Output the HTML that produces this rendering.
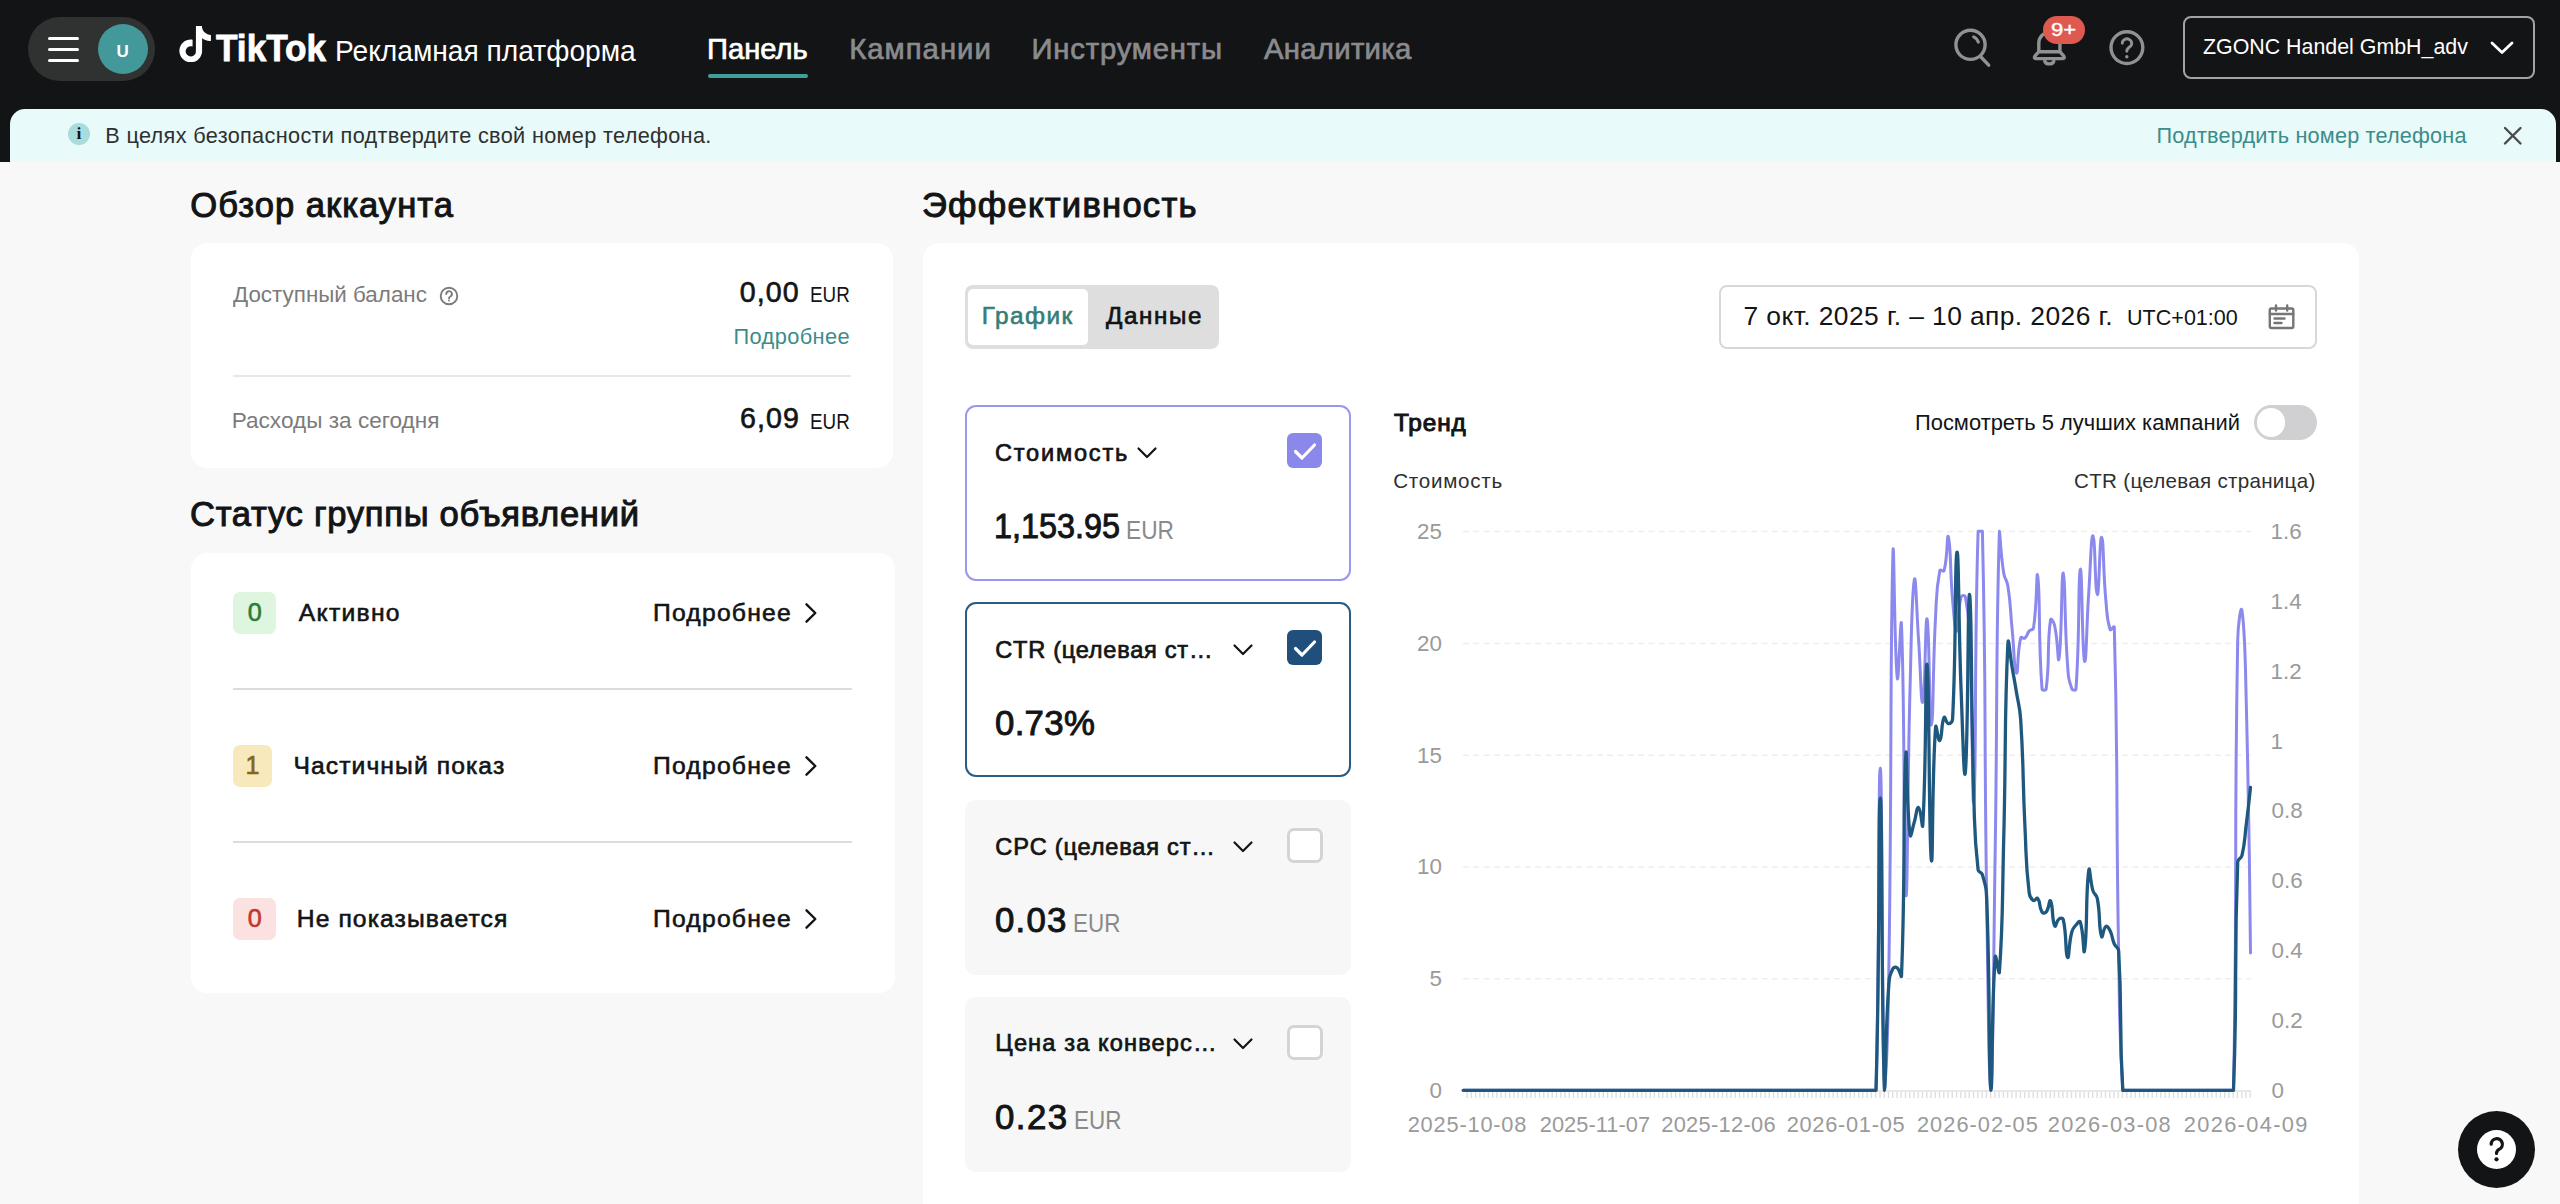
<!DOCTYPE html>
<html lang="ru"><head><meta charset="utf-8"><title>TikTok Ads Manager</title>
<style>
*{margin:0;padding:0;box-sizing:border-box}
html,body{width:2560px;height:1204px;overflow:hidden;background:#f8f8f8;font-family:"Liberation Sans",sans-serif}
.a{position:absolute}
.t{position:absolute;white-space:nowrap;line-height:1;font-family:"Liberation Sans",sans-serif}
.card{position:absolute;background:#fff;border-radius:16px}
.hr{position:absolute;height:2px;background:#e6e6e6}
</style></head><body>
<!-- header -->
<div class="a" style="left:0;top:0;width:2560px;height:162px;background:#131416"></div>
<div class="a" style="left:28px;top:17px;width:127px;height:64px;border-radius:32px;background:#303131"></div>
<div class="a" style="left:48px;top:37px;width:31px;height:3px;border-radius:2px;background:#fff"></div>
<div class="a" style="left:48px;top:48px;width:31px;height:3px;border-radius:2px;background:#fff"></div>
<div class="a" style="left:48px;top:59px;width:31px;height:3px;border-radius:2px;background:#fff"></div>
<div class="a" style="left:98px;top:24px;width:50px;height:50px;border-radius:25px;background:#43999a"></div>
<svg class="a" style="left:177px;top:25.6px" width="36.3" height="36.3" viewBox="0 0 24 24"><path fill="#fff" d="M12.525.02c1.31-.02 2.61-.01 3.91-.02.08 1.53.63 3.09 1.75 4.17 1.12 1.11 2.7 1.62 4.24 1.79v4.03c-1.44-.05-2.89-.35-4.2-.97-.57-.26-1.1-.59-1.62-.93-.01 2.92.01 5.84-.02 8.75-.08 1.4-.54 2.79-1.35 3.94-1.31 1.92-3.58 3.17-5.91 3.21-1.43.08-2.86-.31-4.08-1.03-2.02-1.19-3.44-3.37-3.65-5.71-.02-.5-.03-1-.01-1.49.18-1.9 1.12-3.72 2.58-4.96 1.66-1.44 3.98-2.13 6.15-1.72.02 1.48-.04 2.96-.04 4.44-.99-.32-2.15-.23-3.02.37-.63.41-1.11 1.04-1.36 1.75-.21.51-.15 1.07-.14 1.61.24 1.64 1.82 3.02 3.5 2.87 1.12-.01 2.19-.66 2.77-1.61.19-.33.4-.67.41-1.06.1-1.79.06-3.57.07-5.36.01-4.03-.01-8.05.02-12.07z"/></svg>
<div class="a" style="left:708px;top:74px;width:100px;height:4px;border-radius:2px;background:#3f9f9b"></div>
<!-- header icons -->
<svg class="a" style="left:0;top:0" width="2560" height="110" viewBox="0 0 2560 110" fill="none" stroke="#8f9193" stroke-width="3.4" stroke-linecap="round" stroke-linejoin="round">
<circle cx="1970.5" cy="44.8" r="14.6"/><path d="M1981 57L1988.7 65.2"/><path d="M1973.6 36.9a9 9 0 0 1 4.8 5.3" stroke-width="3"/>
<path d="M2038.8 51.7V42.9a10.55 10.55 0 0 1 21.1 0V51.7"/><path d="M2038.8 51.7H2059.9L2063.8 56.1q1.4 2.5-1.6 2.5H2036.5q-3 0-1.6-2.5Z"/><path d="M2044.8 61.2a4.6 3.4 0 0 0 9 0"/>
<circle cx="2126.9" cy="47.6" r="15.9"/><path d="M2122.3 43.3a4.7 4.4 0 1 1 7.2 3.7c-1.9 1.2-2.7 2-2.7 4.2" stroke-width="2.9"/><circle cx="2126.8" cy="56.8" r="1.7" fill="#8f9193" stroke="none"/>
</svg>
<div class="a" style="left:2043px;top:15.6px;width:42.2px;height:28.3px;border-radius:14.2px;background:#de5a50"></div>
<div class="a" style="left:2183px;top:16px;width:352px;height:63px;border:2px solid #a2a3a4;border-radius:8px"></div>
<svg class="a" style="left:2488px;top:39px" width="30" height="20" viewBox="0 0 30 20" fill="none" stroke="#fff" stroke-width="2.8" stroke-linecap="round" stroke-linejoin="round"><path d="M4 4l10 9.6L24 4"/></svg>
<!-- banner -->
<div class="a" style="left:10.4px;top:108.5px;width:2546px;height:54px;border-radius:15px 15px 0 0;background:#e8faf9"></div>
<div class="a" style="left:68px;top:123px;width:22px;height:22px;border-radius:11px;background:#a9dcdc"></div>
<div class="t" style="left:76.4px;top:125.3px;font:bold 17.5px 'Liberation Serif',serif;line-height:1;color:#131416">i</div>
<svg class="a" style="left:2502px;top:125px" width="22" height="22" viewBox="0 0 22 22" fill="none" stroke="#4a4b4d" stroke-width="2.4" stroke-linecap="round"><path d="M3 3l15.5 15.5M18.5 3L3 18.5"/></svg>
<!-- page -->
<div class="a" style="left:0;top:162px;width:2560px;height:1042px;background:#f8f8f8"></div>
<div class="card" style="left:190.5px;top:243px;width:702px;height:225px"></div>
<div class="hr" style="left:232.5px;top:375.1px;width:618px;height:1.6px;background:#e8e8e8"></div>
<svg class="a" style="left:438.5px;top:285.5px" width="20" height="20" viewBox="0 0 20 20" fill="none" stroke="#7b7b7b" stroke-width="1.9" stroke-linecap="round"><circle cx="10" cy="10" r="8.3"/><path d="M7.3 8a2.8 2.8 0 1 1 4 2.5c-.9.5-1.3 1-1.3 2"/><circle cx="10" cy="14.7" r=".9" fill="#7b7b7b" stroke="none"/></svg>
<div class="card" style="left:190.5px;top:552.5px;width:704px;height:440px"></div>
<div class="a" style="left:232.5px;top:591.5px;width:43.5px;height:42px;border-radius:7px;background:#def5df"></div>
<div class="a" style="left:232.5px;top:744.5px;width:39.5px;height:42px;border-radius:7px;background:#f7e9bb"></div>
<div class="a" style="left:232.5px;top:897.5px;width:43.5px;height:42px;border-radius:7px;background:#fbe1e0"></div>
<div class="hr" style="left:232.5px;top:687.5px;width:619.5px;background:#dcdcdc"></div>
<div class="hr" style="left:232.5px;top:840.5px;width:619.5px;background:#dcdcdc"></div>
<svg class="a" style="left:801px;top:600px" width="20" height="26" viewBox="0 0 20 26" fill="none" stroke="#131416" stroke-width="2.4" stroke-linecap="round" stroke-linejoin="round"><path d="M5.5 4.3l8.8 8.7-8.8 8.7"/></svg>
<svg class="a" style="left:801px;top:753px" width="20" height="26" viewBox="0 0 20 26" fill="none" stroke="#131416" stroke-width="2.4" stroke-linecap="round" stroke-linejoin="round"><path d="M5.5 4.3l8.8 8.7-8.8 8.7"/></svg>
<svg class="a" style="left:801px;top:906px" width="20" height="26" viewBox="0 0 20 26" fill="none" stroke="#131416" stroke-width="2.4" stroke-linecap="round" stroke-linejoin="round"><path d="M5.5 4.3l8.8 8.7-8.8 8.7"/></svg>
<!-- effectiveness card -->
<div class="card" style="left:922.5px;top:243px;width:1436.5px;height:980px"></div>
<div class="a" style="left:965px;top:285px;width:254px;height:63.5px;border-radius:8px;background:#dedede"></div>
<div class="a" style="left:968px;top:288.5px;width:120px;height:56.5px;border-radius:5px;background:#fff"></div>
<div class="a" style="left:1718.5px;top:285px;width:598px;height:63.5px;border:2px solid #d8d8da;border-radius:8px;background:#fff"></div>
<svg class="a" style="left:2267px;top:303px" width="30" height="28" viewBox="0 0 30 28" fill="none" stroke="#757678" stroke-width="2.4" stroke-linecap="round" stroke-linejoin="round"><rect x="2.8" y="5.5" width="23.5" height="19.5" rx="1.5"/><path d="M2.8 11h23.5M9 2.5v5M20.2 2.5v5M7.5 15.5h10M7.5 20h7"/></svg>
<!-- metric cards -->
<div class="a" style="left:965px;top:405px;width:385.5px;height:175.5px;border:2px solid #9a97f0;border-radius:11px;background:#fff"></div>
<div class="a" style="left:965px;top:601.8px;width:385.5px;height:175.4px;border:2px solid #2a5b83;border-radius:11px;background:#fff"></div>
<div class="a" style="left:965px;top:799.5px;width:385.5px;height:175.5px;border-radius:11px;background:#f7f7f7"></div>
<div class="a" style="left:965px;top:996.5px;width:385.5px;height:175.5px;border-radius:11px;background:#f7f7f7"></div>
<svg class="a" style="left:1135px;top:444px" width="24" height="18" viewBox="0 0 24 18" fill="none" stroke="#131416" stroke-width="2.2" stroke-linecap="round" stroke-linejoin="round"><path d="M3.5 4.5l8.5 8.5 8.5-8.5"/></svg>
<svg class="a" style="left:1231px;top:641px" width="24" height="18" viewBox="0 0 24 18" fill="none" stroke="#131416" stroke-width="2.2" stroke-linecap="round" stroke-linejoin="round"><path d="M3.5 4.5l8.5 8.5 8.5-8.5"/></svg>
<svg class="a" style="left:1231px;top:838px" width="24" height="18" viewBox="0 0 24 18" fill="none" stroke="#131416" stroke-width="2.2" stroke-linecap="round" stroke-linejoin="round"><path d="M3.5 4.5l8.5 8.5 8.5-8.5"/></svg>
<svg class="a" style="left:1231px;top:1035px" width="24" height="18" viewBox="0 0 24 18" fill="none" stroke="#131416" stroke-width="2.2" stroke-linecap="round" stroke-linejoin="round"><path d="M3.5 4.5l8.5 8.5 8.5-8.5"/></svg>
<div class="a" style="left:1287px;top:433px;width:35px;height:35px;border-radius:6px;background:#8b88ec"></div>
<svg class="a" style="left:1287px;top:433px" width="36" height="36" viewBox="0 0 36 36" fill="none" stroke="#fff" stroke-width="3.2" stroke-linecap="round" stroke-linejoin="round"><path d="M8.5 18.5l6.5 6.5L27.5 12"/></svg>
<div class="a" style="left:1287px;top:630px;width:35px;height:35px;border-radius:6px;background:#1f4f7a"></div>
<svg class="a" style="left:1287px;top:630px" width="36" height="36" viewBox="0 0 36 36" fill="none" stroke="#fff" stroke-width="3.2" stroke-linecap="round" stroke-linejoin="round"><path d="M8.5 18.5l6.5 6.5L27.5 12"/></svg>
<div class="a" style="left:1287px;top:827.5px;width:35.5px;height:35px;border:3px solid #d4d4d6;border-radius:7px;background:#fff"></div>
<div class="a" style="left:1287px;top:1024.5px;width:35.5px;height:35px;border:3px solid #d4d4d6;border-radius:7px;background:#fff"></div>
<!-- toggle -->
<div class="a" style="left:2253.5px;top:405px;width:63px;height:34.5px;border-radius:17.5px;background:#d0d0d2"></div>
<div class="a" style="left:2256.5px;top:408px;width:28.5px;height:28.5px;border-radius:14.5px;background:#fff"></div>
<svg class="a" style="left:0;top:0" width="2560" height="1204" viewBox="0 0 2560 1204">
<line x1="1463" x2="2251" y1="531.6" y2="531.6" stroke="#eeeeef" stroke-width="1.5" stroke-dasharray="6 4.3"/>
<line x1="1463" x2="2251" y1="643.4" y2="643.4" stroke="#eeeeef" stroke-width="1.5" stroke-dasharray="6 4.3"/>
<line x1="1463" x2="2251" y1="755.2" y2="755.2" stroke="#eeeeef" stroke-width="1.5" stroke-dasharray="6 4.3"/>
<line x1="1463" x2="2251" y1="867.0" y2="867.0" stroke="#eeeeef" stroke-width="1.5" stroke-dasharray="6 4.3"/>
<line x1="1463" x2="2251" y1="978.8" y2="978.8" stroke="#eeeeef" stroke-width="1.5" stroke-dasharray="6 4.3"/>
<line x1="1463" x2="2251" y1="1090.8999999999999" y2="1090.8999999999999" stroke="#e2e2e4" stroke-width="1.5"/>
<path d="M1467.2,1091.5v6.4M1471.4,1091.5v6.4M1475.7,1091.5v6.4M1479.9,1091.5v6.4M1484.2,1091.5v6.4M1488.4,1091.5v6.4M1492.7,1091.5v6.4M1496.9,1091.5v6.4M1501.2,1091.5v6.4M1505.5,1091.5v6.4M1509.7,1091.5v6.4M1514.0,1091.5v6.4M1518.2,1091.5v6.4M1522.5,1091.5v6.4M1526.7,1091.5v6.4M1531.0,1091.5v6.4M1535.2,1091.5v6.4M1539.5,1091.5v6.4M1543.8,1091.5v6.4M1548.0,1091.5v6.4M1552.3,1091.5v6.4M1556.5,1091.5v6.4M1560.8,1091.5v6.4M1565.0,1091.5v6.4M1569.3,1091.5v6.4M1573.5,1091.5v6.4M1577.8,1091.5v6.4M1582.1,1091.5v6.4M1586.3,1091.5v6.4M1590.6,1091.5v6.4M1594.8,1091.5v6.4M1599.1,1091.5v6.4M1603.3,1091.5v6.4M1607.6,1091.5v6.4M1611.8,1091.5v6.4M1616.1,1091.5v6.4M1620.4,1091.5v6.4M1624.6,1091.5v6.4M1628.9,1091.5v6.4M1633.1,1091.5v6.4M1637.4,1091.5v6.4M1641.6,1091.5v6.4M1645.9,1091.5v6.4M1650.2,1091.5v6.4M1654.4,1091.5v6.4M1658.7,1091.5v6.4M1662.9,1091.5v6.4M1667.2,1091.5v6.4M1671.4,1091.5v6.4M1675.7,1091.5v6.4M1679.9,1091.5v6.4M1684.2,1091.5v6.4M1688.5,1091.5v6.4M1692.7,1091.5v6.4M1697.0,1091.5v6.4M1701.2,1091.5v6.4M1705.5,1091.5v6.4M1709.7,1091.5v6.4M1714.0,1091.5v6.4M1718.2,1091.5v6.4M1722.5,1091.5v6.4M1726.8,1091.5v6.4M1731.0,1091.5v6.4M1735.3,1091.5v6.4M1739.5,1091.5v6.4M1743.8,1091.5v6.4M1748.0,1091.5v6.4M1752.3,1091.5v6.4M1756.5,1091.5v6.4M1760.8,1091.5v6.4M1765.1,1091.5v6.4M1769.3,1091.5v6.4M1773.6,1091.5v6.4M1777.8,1091.5v6.4M1782.1,1091.5v6.4M1786.3,1091.5v6.4M1790.6,1091.5v6.4M1794.8,1091.5v6.4M1799.1,1091.5v6.4M1803.4,1091.5v6.4M1807.6,1091.5v6.4M1811.9,1091.5v6.4M1816.1,1091.5v6.4M1820.4,1091.5v6.4M1824.6,1091.5v6.4M1828.9,1091.5v6.4M1833.1,1091.5v6.4M1837.4,1091.5v6.4M1841.7,1091.5v6.4M1845.9,1091.5v6.4M1850.2,1091.5v6.4M1854.4,1091.5v6.4M1858.7,1091.5v6.4M1862.9,1091.5v6.4M1867.2,1091.5v6.4M1871.4,1091.5v6.4M1875.7,1091.5v6.4M1880.0,1091.5v6.4M1884.2,1091.5v6.4M1888.5,1091.5v6.4M1892.7,1091.5v6.4M1897.0,1091.5v6.4M1901.2,1091.5v6.4M1905.5,1091.5v6.4M1909.7,1091.5v6.4M1914.0,1091.5v6.4M1918.3,1091.5v6.4M1922.5,1091.5v6.4M1926.8,1091.5v6.4M1931.0,1091.5v6.4M1935.3,1091.5v6.4M1939.5,1091.5v6.4M1943.8,1091.5v6.4M1948.0,1091.5v6.4M1952.3,1091.5v6.4M1956.6,1091.5v6.4M1960.8,1091.5v6.4M1965.1,1091.5v6.4M1969.3,1091.5v6.4M1973.6,1091.5v6.4M1977.8,1091.5v6.4M1982.1,1091.5v6.4M1986.4,1091.5v6.4M1990.6,1091.5v6.4M1994.9,1091.5v6.4M1999.1,1091.5v6.4M2003.4,1091.5v6.4M2007.6,1091.5v6.4M2011.9,1091.5v6.4M2016.1,1091.5v6.4M2020.4,1091.5v6.4M2024.7,1091.5v6.4M2028.9,1091.5v6.4M2033.2,1091.5v6.4M2037.4,1091.5v6.4M2041.7,1091.5v6.4M2045.9,1091.5v6.4M2050.2,1091.5v6.4M2054.4,1091.5v6.4M2058.7,1091.5v6.4M2063.0,1091.5v6.4M2067.2,1091.5v6.4M2071.5,1091.5v6.4M2075.7,1091.5v6.4M2080.0,1091.5v6.4M2084.2,1091.5v6.4M2088.5,1091.5v6.4M2092.7,1091.5v6.4M2097.0,1091.5v6.4M2101.3,1091.5v6.4M2105.5,1091.5v6.4M2109.8,1091.5v6.4M2114.0,1091.5v6.4M2118.3,1091.5v6.4M2122.5,1091.5v6.4M2126.8,1091.5v6.4M2131.0,1091.5v6.4M2135.3,1091.5v6.4M2139.6,1091.5v6.4M2143.8,1091.5v6.4M2148.1,1091.5v6.4M2152.3,1091.5v6.4M2156.6,1091.5v6.4M2160.8,1091.5v6.4M2165.1,1091.5v6.4M2169.3,1091.5v6.4M2173.6,1091.5v6.4M2177.9,1091.5v6.4M2182.1,1091.5v6.4M2186.4,1091.5v6.4M2190.6,1091.5v6.4M2194.9,1091.5v6.4M2199.1,1091.5v6.4M2203.4,1091.5v6.4M2207.6,1091.5v6.4M2211.9,1091.5v6.4M2216.2,1091.5v6.4M2220.4,1091.5v6.4M2224.7,1091.5v6.4M2228.9,1091.5v6.4M2233.2,1091.5v6.4M2237.4,1091.5v6.4M2241.7,1091.5v6.4M2245.9,1091.5v6.4M2250.2,1091.5v6.4" stroke="#dfdfe1" stroke-width="1.4" fill="none"/>
<path d="M1463.2,1090.3C1463.2,1090.3 1465.3,1090.3 1467.5,1090.3C1469.6,1090.3 1469.6,1090.3 1471.7,1090.3C1473.8,1090.3 1473.8,1090.3 1476.0,1090.3C1478.1,1090.3 1478.1,1090.3 1480.2,1090.3C1482.4,1090.3 1482.4,1090.3 1484.5,1090.3C1486.6,1090.3 1486.6,1090.3 1488.7,1090.3C1490.9,1090.3 1490.9,1090.3 1493.0,1090.3C1495.1,1090.3 1495.1,1090.3 1497.2,1090.3C1499.4,1090.3 1499.4,1090.3 1501.5,1090.3C1503.6,1090.3 1503.6,1090.3 1505.8,1090.3C1507.9,1090.3 1507.9,1090.3 1510.0,1090.3C1512.1,1090.3 1512.1,1090.3 1514.3,1090.3C1516.4,1090.3 1516.4,1090.3 1518.5,1090.3C1520.7,1090.3 1520.7,1090.3 1522.8,1090.3C1524.9,1090.3 1524.9,1090.3 1527.0,1090.3C1529.2,1090.3 1529.2,1090.3 1531.3,1090.3C1533.4,1090.3 1533.4,1090.3 1535.5,1090.3C1537.7,1090.3 1537.7,1090.3 1539.8,1090.3C1541.9,1090.3 1541.9,1090.3 1544.1,1090.3C1546.2,1090.3 1546.2,1090.3 1548.3,1090.3C1550.4,1090.3 1550.4,1090.3 1552.6,1090.3C1554.7,1090.3 1554.7,1090.3 1556.8,1090.3C1559.0,1090.3 1559.0,1090.3 1561.1,1090.3C1563.2,1090.3 1563.2,1090.3 1565.3,1090.3C1567.5,1090.3 1567.5,1090.3 1569.6,1090.3C1571.7,1090.3 1571.7,1090.3 1573.8,1090.3C1576.0,1090.3 1576.0,1090.3 1578.1,1090.3C1580.2,1090.3 1580.2,1090.3 1582.4,1090.3C1584.5,1090.3 1584.5,1090.3 1586.6,1090.3C1588.7,1090.3 1588.7,1090.3 1590.9,1090.3C1593.0,1090.3 1593.0,1090.3 1595.1,1090.3C1597.3,1090.3 1597.3,1090.3 1599.4,1090.3C1601.5,1090.3 1601.5,1090.3 1603.6,1090.3C1605.8,1090.3 1605.8,1090.3 1607.9,1090.3C1610.0,1090.3 1610.0,1090.3 1612.1,1090.3C1614.3,1090.3 1614.3,1090.3 1616.4,1090.3C1618.5,1090.3 1618.5,1090.3 1620.7,1090.3C1622.8,1090.3 1622.8,1090.3 1624.9,1090.3C1627.0,1090.3 1627.0,1090.3 1629.2,1090.3C1631.3,1090.3 1631.3,1090.3 1633.4,1090.3C1635.6,1090.3 1635.6,1090.3 1637.7,1090.3C1639.8,1090.3 1639.8,1090.3 1641.9,1090.3C1644.1,1090.3 1644.1,1090.3 1646.2,1090.3C1648.3,1090.3 1648.3,1090.3 1650.5,1090.3C1652.6,1090.3 1652.6,1090.3 1654.7,1090.3C1656.8,1090.3 1656.8,1090.3 1659.0,1090.3C1661.1,1090.3 1661.1,1090.3 1663.2,1090.3C1665.3,1090.3 1665.3,1090.3 1667.5,1090.3C1669.6,1090.3 1669.6,1090.3 1671.7,1090.3C1673.9,1090.3 1673.9,1090.3 1676.0,1090.3C1678.1,1090.3 1678.1,1090.3 1680.2,1090.3C1682.4,1090.3 1682.4,1090.3 1684.5,1090.3C1686.6,1090.3 1686.6,1090.3 1688.8,1090.3C1690.9,1090.3 1690.9,1090.3 1693.0,1090.3C1695.1,1090.3 1695.1,1090.3 1697.3,1090.3C1699.4,1090.3 1699.4,1090.3 1701.5,1090.3C1703.6,1090.3 1703.6,1090.3 1705.8,1090.3C1707.9,1090.3 1707.9,1090.3 1710.0,1090.3C1712.2,1090.3 1712.2,1090.3 1714.3,1090.3C1716.4,1090.3 1716.4,1090.3 1718.5,1090.3C1720.7,1090.3 1720.7,1090.3 1722.8,1090.3C1724.9,1090.3 1724.9,1090.3 1727.1,1090.3C1729.2,1090.3 1729.2,1090.3 1731.3,1090.3C1733.4,1090.3 1733.4,1090.3 1735.6,1090.3C1737.7,1090.3 1737.7,1090.3 1739.8,1090.3C1741.9,1090.3 1741.9,1090.3 1744.1,1090.3C1746.2,1090.3 1746.2,1090.3 1748.3,1090.3C1750.5,1090.3 1750.5,1090.3 1752.6,1090.3C1754.7,1090.3 1754.7,1090.3 1756.8,1090.3C1759.0,1090.3 1759.0,1090.3 1761.1,1090.3C1763.2,1090.3 1763.2,1090.3 1765.4,1090.3C1767.5,1090.3 1767.5,1090.3 1769.6,1090.3C1771.7,1090.3 1771.7,1090.3 1773.9,1090.3C1776.0,1090.3 1776.0,1090.3 1778.1,1090.3C1780.2,1090.3 1780.2,1090.3 1782.4,1090.3C1784.5,1090.3 1784.5,1090.3 1786.6,1090.3C1788.8,1090.3 1788.8,1090.3 1790.9,1090.3C1793.0,1090.3 1793.0,1090.3 1795.1,1090.3C1797.3,1090.3 1797.3,1090.3 1799.4,1090.3C1801.5,1090.3 1801.5,1090.3 1803.7,1090.3C1805.8,1090.3 1805.8,1090.3 1807.9,1090.3C1810.0,1090.3 1810.0,1090.3 1812.2,1090.3C1814.3,1090.3 1814.3,1090.3 1816.4,1090.3C1818.6,1090.3 1818.6,1090.3 1820.7,1090.3C1822.8,1090.3 1822.8,1090.3 1824.9,1090.3C1827.1,1090.3 1827.1,1090.3 1829.2,1090.3C1831.3,1090.3 1831.3,1090.3 1833.4,1090.3C1835.6,1090.3 1835.6,1090.3 1837.7,1090.3C1839.8,1090.3 1839.8,1090.3 1842.0,1090.3C1844.1,1090.3 1844.1,1090.3 1846.2,1090.3C1848.3,1090.3 1848.3,1090.3 1850.5,1090.3C1852.6,1090.3 1852.6,1090.3 1854.7,1090.3C1856.9,1090.3 1856.9,1090.3 1859.0,1090.3C1861.1,1090.3 1861.1,1090.3 1863.2,1090.3C1865.4,1090.3 1865.4,1090.3 1867.5,1090.3C1869.6,1090.3 1869.6,1090.3 1871.7,1090.3C1873.9,1090.3 1875.9,1090.3 1876.0,1090.3C1880.2,931.2 1878.1,768.0 1880.3,768.0C1882.4,768.0 1881.4,1014.6 1884.5,1090.3C1885.6,1090.3 1887.9,1032.2 1888.8,974.0C1892.1,762.5 1889.8,664.8 1893.0,551.0C1894.0,531.3 1894.3,651.9 1897.3,678.0C1898.5,688.9 1900.8,607.2 1901.5,625.0C1905.1,715.5 1903.4,876.1 1905.8,894.6C1907.6,908.6 1907.3,792.3 1910.0,690.0C1911.5,635.0 1911.6,596.2 1914.3,580.0C1915.8,571.2 1916.5,610.0 1918.6,640.0C1920.7,671.0 1921.0,706.5 1922.8,702.0C1925.3,696.0 1925.2,613.9 1927.1,619.0C1929.5,625.4 1929.2,725.7 1931.3,725.0C1933.5,724.2 1932.6,670.4 1935.6,616.0C1936.8,593.2 1935.9,591.4 1939.8,570.6C1940.2,568.7 1943.6,572.5 1944.1,570.6C1947.9,555.7 1946.9,531.9 1948.3,537.0C1951.1,546.6 1949.8,568.6 1952.6,600.0C1954.0,615.6 1954.8,631.7 1956.9,631.0C1959.1,630.2 1957.3,612.1 1961.1,597.0C1961.6,595.1 1965.0,595.1 1965.4,597.0C1969.2,616.6 1968.7,618.4 1969.6,640.0C1973.0,719.9 1972.3,820.3 1973.9,800.0C1976.6,765.9 1974.0,663.6 1978.1,531.3C1978.2,531.3 1982.3,531.3 1982.4,531.3C1986.6,713.5 1983.8,715.7 1986.7,900.0C1988.1,994.0 1989.0,1090.3 1990.9,1088.0C1993.3,1074.0 1993.3,969.0 1995.2,850.0C1997.6,690.7 1995.7,653.7 1999.4,531.3C1999.9,531.3 2000.5,552.4 2003.7,573.0C2004.7,579.7 2006.9,579.3 2007.9,586.0C2011.2,607.8 2010.0,608.0 2012.2,630.0C2014.3,651.5 2014.1,670.8 2016.4,673.0C2018.4,674.8 2016.9,653.6 2020.7,638.0C2021.2,636.1 2023.5,639.2 2025.0,638.0C2027.8,635.7 2026.6,634.1 2029.2,631.0C2030.9,629.1 2033.1,630.5 2033.5,628.0C2037.3,603.0 2036.4,566.4 2037.7,576.0C2040.6,596.8 2037.9,634.4 2042.0,688.7C2042.1,690.7 2046.0,690.7 2046.2,688.7C2050.2,656.4 2046.6,648.3 2050.5,620.0C2050.9,617.0 2054.0,622.5 2054.7,626.0C2058.2,641.7 2057.8,665.8 2059.0,658.5C2062.1,639.3 2061.2,571.7 2063.3,573.0C2065.4,574.4 2064.2,618.6 2067.5,664.0C2068.4,676.5 2068.1,678.1 2071.8,688.7C2072.4,690.5 2075.9,690.8 2076.0,688.7C2080.1,631.1 2077.9,577.2 2080.3,569.4C2082.1,563.4 2082.1,654.6 2084.5,661.0C2086.4,665.9 2086.4,626.5 2088.8,592.0C2090.7,563.8 2091.0,535.0 2093.0,535.7C2095.2,536.4 2095.1,594.3 2097.3,594.7C2099.4,595.1 2099.5,536.1 2101.6,537.3C2103.8,538.5 2102.9,568.5 2105.8,599.5C2107.2,614.6 2106.4,617.7 2110.1,629.6C2110.7,631.5 2114.3,624.8 2114.3,627.2C2118.5,785.4 2115.6,789.0 2118.6,950.7C2119.9,1020.5 2118.7,1022.6 2122.8,1090.3C2123.0,1090.3 2125.0,1090.3 2127.1,1090.3C2129.2,1090.3 2129.2,1090.3 2131.3,1090.3C2133.5,1090.3 2133.5,1090.3 2135.6,1090.3C2137.7,1090.3 2137.7,1090.3 2139.9,1090.3C2142.0,1090.3 2142.0,1090.3 2144.1,1090.3C2146.2,1090.3 2146.2,1090.3 2148.4,1090.3C2150.5,1090.3 2150.5,1090.3 2152.6,1090.3C2154.8,1090.3 2154.8,1090.3 2156.9,1090.3C2159.0,1090.3 2159.0,1090.3 2161.1,1090.3C2163.3,1090.3 2163.3,1090.3 2165.4,1090.3C2167.5,1090.3 2167.5,1090.3 2169.6,1090.3C2171.8,1090.3 2171.8,1090.3 2173.9,1090.3C2176.0,1090.3 2176.0,1090.3 2178.2,1090.3C2180.3,1090.3 2180.3,1090.3 2182.4,1090.3C2184.5,1090.3 2184.5,1090.3 2186.7,1090.3C2188.8,1090.3 2188.8,1090.3 2190.9,1090.3C2193.1,1090.3 2193.1,1090.3 2195.2,1090.3C2197.3,1090.3 2197.3,1090.3 2199.4,1090.3C2201.6,1090.3 2201.6,1090.3 2203.7,1090.3C2205.8,1090.3 2205.8,1090.3 2207.9,1090.3C2210.1,1090.3 2210.1,1090.3 2212.2,1090.3C2214.3,1090.3 2214.3,1090.3 2216.5,1090.3C2218.6,1090.3 2218.6,1090.3 2220.7,1090.3C2222.8,1090.3 2222.8,1090.3 2225.0,1090.3C2227.1,1090.3 2227.1,1090.3 2229.2,1090.3C2231.4,1090.3 2233.4,1090.3 2233.5,1090.3C2237.7,867.3 2233.7,865.0 2237.7,640.0C2238.0,625.2 2240.9,603.2 2242.0,610.7C2245.2,633.2 2245.1,655.3 2246.2,700.0C2249.4,826.5 2250.5,953.0 2250.5,953.0" fill="none" stroke="#8c89ee" stroke-width="3" stroke-linejoin="round" stroke-linecap="round"/>
<path d="M1463.2,1090.3C1463.2,1090.3 1465.3,1090.3 1467.5,1090.3C1469.6,1090.3 1469.6,1090.3 1471.7,1090.3C1473.8,1090.3 1473.8,1090.3 1476.0,1090.3C1478.1,1090.3 1478.1,1090.3 1480.2,1090.3C1482.4,1090.3 1482.4,1090.3 1484.5,1090.3C1486.6,1090.3 1486.6,1090.3 1488.7,1090.3C1490.9,1090.3 1490.9,1090.3 1493.0,1090.3C1495.1,1090.3 1495.1,1090.3 1497.2,1090.3C1499.4,1090.3 1499.4,1090.3 1501.5,1090.3C1503.6,1090.3 1503.6,1090.3 1505.8,1090.3C1507.9,1090.3 1507.9,1090.3 1510.0,1090.3C1512.1,1090.3 1512.1,1090.3 1514.3,1090.3C1516.4,1090.3 1516.4,1090.3 1518.5,1090.3C1520.7,1090.3 1520.7,1090.3 1522.8,1090.3C1524.9,1090.3 1524.9,1090.3 1527.0,1090.3C1529.2,1090.3 1529.2,1090.3 1531.3,1090.3C1533.4,1090.3 1533.4,1090.3 1535.5,1090.3C1537.7,1090.3 1537.7,1090.3 1539.8,1090.3C1541.9,1090.3 1541.9,1090.3 1544.1,1090.3C1546.2,1090.3 1546.2,1090.3 1548.3,1090.3C1550.4,1090.3 1550.4,1090.3 1552.6,1090.3C1554.7,1090.3 1554.7,1090.3 1556.8,1090.3C1559.0,1090.3 1559.0,1090.3 1561.1,1090.3C1563.2,1090.3 1563.2,1090.3 1565.3,1090.3C1567.5,1090.3 1567.5,1090.3 1569.6,1090.3C1571.7,1090.3 1571.7,1090.3 1573.8,1090.3C1576.0,1090.3 1576.0,1090.3 1578.1,1090.3C1580.2,1090.3 1580.2,1090.3 1582.4,1090.3C1584.5,1090.3 1584.5,1090.3 1586.6,1090.3C1588.7,1090.3 1588.7,1090.3 1590.9,1090.3C1593.0,1090.3 1593.0,1090.3 1595.1,1090.3C1597.3,1090.3 1597.3,1090.3 1599.4,1090.3C1601.5,1090.3 1601.5,1090.3 1603.6,1090.3C1605.8,1090.3 1605.8,1090.3 1607.9,1090.3C1610.0,1090.3 1610.0,1090.3 1612.1,1090.3C1614.3,1090.3 1614.3,1090.3 1616.4,1090.3C1618.5,1090.3 1618.5,1090.3 1620.7,1090.3C1622.8,1090.3 1622.8,1090.3 1624.9,1090.3C1627.0,1090.3 1627.0,1090.3 1629.2,1090.3C1631.3,1090.3 1631.3,1090.3 1633.4,1090.3C1635.6,1090.3 1635.6,1090.3 1637.7,1090.3C1639.8,1090.3 1639.8,1090.3 1641.9,1090.3C1644.1,1090.3 1644.1,1090.3 1646.2,1090.3C1648.3,1090.3 1648.3,1090.3 1650.5,1090.3C1652.6,1090.3 1652.6,1090.3 1654.7,1090.3C1656.8,1090.3 1656.8,1090.3 1659.0,1090.3C1661.1,1090.3 1661.1,1090.3 1663.2,1090.3C1665.3,1090.3 1665.3,1090.3 1667.5,1090.3C1669.6,1090.3 1669.6,1090.3 1671.7,1090.3C1673.9,1090.3 1673.9,1090.3 1676.0,1090.3C1678.1,1090.3 1678.1,1090.3 1680.2,1090.3C1682.4,1090.3 1682.4,1090.3 1684.5,1090.3C1686.6,1090.3 1686.6,1090.3 1688.8,1090.3C1690.9,1090.3 1690.9,1090.3 1693.0,1090.3C1695.1,1090.3 1695.1,1090.3 1697.3,1090.3C1699.4,1090.3 1699.4,1090.3 1701.5,1090.3C1703.6,1090.3 1703.6,1090.3 1705.8,1090.3C1707.9,1090.3 1707.9,1090.3 1710.0,1090.3C1712.2,1090.3 1712.2,1090.3 1714.3,1090.3C1716.4,1090.3 1716.4,1090.3 1718.5,1090.3C1720.7,1090.3 1720.7,1090.3 1722.8,1090.3C1724.9,1090.3 1724.9,1090.3 1727.1,1090.3C1729.2,1090.3 1729.2,1090.3 1731.3,1090.3C1733.4,1090.3 1733.4,1090.3 1735.6,1090.3C1737.7,1090.3 1737.7,1090.3 1739.8,1090.3C1741.9,1090.3 1741.9,1090.3 1744.1,1090.3C1746.2,1090.3 1746.2,1090.3 1748.3,1090.3C1750.5,1090.3 1750.5,1090.3 1752.6,1090.3C1754.7,1090.3 1754.7,1090.3 1756.8,1090.3C1759.0,1090.3 1759.0,1090.3 1761.1,1090.3C1763.2,1090.3 1763.2,1090.3 1765.4,1090.3C1767.5,1090.3 1767.5,1090.3 1769.6,1090.3C1771.7,1090.3 1771.7,1090.3 1773.9,1090.3C1776.0,1090.3 1776.0,1090.3 1778.1,1090.3C1780.2,1090.3 1780.2,1090.3 1782.4,1090.3C1784.5,1090.3 1784.5,1090.3 1786.6,1090.3C1788.8,1090.3 1788.8,1090.3 1790.9,1090.3C1793.0,1090.3 1793.0,1090.3 1795.1,1090.3C1797.3,1090.3 1797.3,1090.3 1799.4,1090.3C1801.5,1090.3 1801.5,1090.3 1803.7,1090.3C1805.8,1090.3 1805.8,1090.3 1807.9,1090.3C1810.0,1090.3 1810.0,1090.3 1812.2,1090.3C1814.3,1090.3 1814.3,1090.3 1816.4,1090.3C1818.6,1090.3 1818.6,1090.3 1820.7,1090.3C1822.8,1090.3 1822.8,1090.3 1824.9,1090.3C1827.1,1090.3 1827.1,1090.3 1829.2,1090.3C1831.3,1090.3 1831.3,1090.3 1833.4,1090.3C1835.6,1090.3 1835.6,1090.3 1837.7,1090.3C1839.8,1090.3 1839.8,1090.3 1842.0,1090.3C1844.1,1090.3 1844.1,1090.3 1846.2,1090.3C1848.3,1090.3 1848.3,1090.3 1850.5,1090.3C1852.6,1090.3 1852.6,1090.3 1854.7,1090.3C1856.9,1090.3 1856.9,1090.3 1859.0,1090.3C1861.1,1090.3 1861.1,1090.3 1863.2,1090.3C1865.4,1090.3 1865.4,1090.3 1867.5,1090.3C1869.6,1090.3 1869.6,1090.3 1871.7,1090.3C1873.9,1090.3 1875.9,1090.3 1876.0,1090.3C1880.2,946.2 1878.1,798.0 1880.3,798.0C1882.4,798.0 1881.4,1021.6 1884.5,1090.3C1885.6,1090.3 1885.1,1037.4 1888.8,985.0C1889.4,976.5 1889.6,975.3 1893.0,968.5C1893.9,966.8 1895.9,966.8 1897.3,968.0C1900.1,970.4 1901.4,979.6 1901.5,975.6C1905.6,873.1 1902.7,806.6 1905.8,755.0C1906.9,736.3 1906.4,806.3 1910.0,834.9C1910.7,839.8 1912.3,828.5 1914.3,822.0C1916.5,814.8 1916.6,806.8 1918.6,807.5C1920.9,808.3 1922.4,832.2 1922.8,825.0C1926.6,760.8 1925.2,656.8 1927.1,664.6C1929.4,674.2 1928.8,841.2 1931.3,859.8C1933.1,872.4 1931.7,780.9 1935.6,727.0C1936.0,721.3 1938.2,742.3 1939.8,740.5C1942.5,737.6 1940.9,724.0 1944.1,717.6C1945.1,715.6 1946.1,723.3 1948.3,723.6C1950.3,723.9 1952.4,722.0 1952.6,718.8C1956.7,636.4 1954.5,560.4 1956.9,552.5C1958.8,546.0 1958.4,621.3 1961.1,690.0C1962.7,730.9 1964.0,786.9 1965.4,771.8C1968.3,739.2 1967.7,588.2 1969.6,594.7C1971.9,602.3 1970.7,697.4 1973.9,800.0C1975.0,834.9 1974.2,835.6 1978.1,869.7C1978.5,872.9 1981.5,871.6 1982.4,874.7C1985.8,886.6 1986.2,887.0 1986.7,899.6C1990.4,994.8 1988.4,1073.4 1990.9,1090.3C1992.7,1090.3 1991.3,1010.0 1995.2,957.0C1995.6,950.8 1999.0,978.0 1999.4,971.9C2003.2,919.5 2002.0,906.0 2003.7,840.0C2006.2,741.7 2004.2,719.7 2007.9,643.4C2008.4,633.7 2010.0,655.7 2012.2,668.0C2014.3,680.0 2014.5,680.0 2016.4,692.0C2018.7,706.0 2019.8,705.9 2020.7,720.0C2024.1,773.9 2022.3,774.0 2025.0,828.0C2026.6,860.5 2025.4,861.0 2029.2,893.0C2029.7,897.2 2030.7,898.8 2033.5,900.5C2035.0,901.5 2036.7,897.0 2037.7,898.4C2040.9,902.7 2038.7,906.8 2042.0,912.0C2043.0,913.6 2045.1,913.5 2046.2,912.0C2049.4,907.9 2049.1,898.7 2050.5,900.9C2053.4,905.6 2051.5,918.9 2054.7,925.8C2055.8,928.0 2056.2,921.0 2059.0,919.0C2060.5,917.9 2062.8,917.7 2063.3,919.6C2067.1,936.9 2065.0,953.7 2067.5,957.4C2069.2,959.9 2068.5,944.3 2071.8,932.0C2072.8,928.1 2073.4,928.1 2076.0,925.0C2077.7,923.1 2079.6,920.0 2080.3,922.0C2083.9,932.9 2083.4,957.6 2084.5,950.7C2087.7,931.7 2085.4,893.9 2088.8,870.2C2089.7,864.0 2090.0,880.9 2093.0,890.9C2094.3,895.0 2096.5,894.2 2097.3,898.4C2100.8,917.0 2098.2,925.6 2101.6,936.5C2102.5,939.6 2103.1,928.3 2105.8,926.5C2107.3,925.5 2108.8,928.1 2110.1,930.8C2113.0,936.9 2111.6,937.7 2114.3,944.0C2115.9,947.6 2118.3,946.8 2118.6,950.7C2122.6,1019.9 2118.7,1022.6 2122.8,1090.3C2123.0,1090.3 2125.0,1090.3 2127.1,1090.3C2129.2,1090.3 2129.2,1090.3 2131.3,1090.3C2133.5,1090.3 2133.5,1090.3 2135.6,1090.3C2137.7,1090.3 2137.7,1090.3 2139.9,1090.3C2142.0,1090.3 2142.0,1090.3 2144.1,1090.3C2146.2,1090.3 2146.2,1090.3 2148.4,1090.3C2150.5,1090.3 2150.5,1090.3 2152.6,1090.3C2154.8,1090.3 2154.8,1090.3 2156.9,1090.3C2159.0,1090.3 2159.0,1090.3 2161.1,1090.3C2163.3,1090.3 2163.3,1090.3 2165.4,1090.3C2167.5,1090.3 2167.5,1090.3 2169.6,1090.3C2171.8,1090.3 2171.8,1090.3 2173.9,1090.3C2176.0,1090.3 2176.0,1090.3 2178.2,1090.3C2180.3,1090.3 2180.3,1090.3 2182.4,1090.3C2184.5,1090.3 2184.5,1090.3 2186.7,1090.3C2188.8,1090.3 2188.8,1090.3 2190.9,1090.3C2193.1,1090.3 2193.1,1090.3 2195.2,1090.3C2197.3,1090.3 2197.3,1090.3 2199.4,1090.3C2201.6,1090.3 2201.6,1090.3 2203.7,1090.3C2205.8,1090.3 2205.8,1090.3 2207.9,1090.3C2210.1,1090.3 2210.1,1090.3 2212.2,1090.3C2214.3,1090.3 2214.3,1090.3 2216.5,1090.3C2218.6,1090.3 2218.6,1090.3 2220.7,1090.3C2222.8,1090.3 2222.8,1090.3 2225.0,1090.3C2227.1,1090.3 2227.1,1090.3 2229.2,1090.3C2231.4,1090.3 2233.4,1090.3 2233.5,1090.3C2237.7,978.2 2233.6,975.5 2237.7,862.0C2237.9,858.1 2241.1,859.2 2242.0,855.4C2245.4,840.7 2244.3,840.2 2246.2,825.0C2248.6,806.2 2250.5,787.4 2250.5,787.4" fill="none" stroke="#1f587f" stroke-width="3.3" stroke-linejoin="round" stroke-linecap="round"/>
</svg>
<div class="t" style="left:116.60px;top:42.53px;font-size:17px;color:#fff;font-weight:bold;">U</div>
<div class="t" style="left:215.90px;top:30.66px;font-size:36.2px;color:#fff;font-weight:bold;transform:scaleX(0.9724);transform-origin:0 50%;-webkit-text-stroke:0.8px #fff;">TikTok</div>
<div class="t" style="left:334.93px;top:37.08px;font-size:28.6px;color:#fff;transform:scaleX(0.9850);transform-origin:0 50%;">Рекламная платформа</div>
<div class="t" style="left:706.76px;top:34.24px;font-size:29.3px;color:#fff;transform:scaleX(0.9955);transform-origin:0 50%;-webkit-text-stroke:0.7px #fff;">Панель</div>
<div class="t" style="left:849.25px;top:34.24px;font-size:29.3px;color:#8a8b8d;letter-spacing:1.000px;-webkit-text-stroke:0.7px #8a8b8d;">Кампании</div>
<div class="t" style="left:1031.50px;top:34.24px;font-size:29.3px;color:#8a8b8d;letter-spacing:0.788px;-webkit-text-stroke:0.7px #8a8b8d;">Инструменты</div>
<div class="t" style="left:1264.00px;top:34.24px;font-size:29.3px;color:#8a8b8d;letter-spacing:0.285px;-webkit-text-stroke:0.7px #8a8b8d;">Аналитика</div>
<div class="t" style="left:2051.30px;top:21.38px;font-size:18.6px;color:#fff;transform:scaleX(1.1848);transform-origin:0 50%;-webkit-text-stroke:0.4px #fff;">9+</div>
<div class="t" style="left:2202.50px;top:36.08px;font-size:21.8px;color:#fff;transform:scaleX(0.9806);transform-origin:0 50%;">ZGONC Handel GmbH_adv</div>
<div class="t" style="left:105.30px;top:124.86px;font-size:21.7px;color:#2e3030;letter-spacing:0.329px;">В целях безопасности подтвердите свой номер телефона.</div>
<div class="t" style="left:2156.50px;top:124.86px;font-size:21.7px;color:#3c8c89;letter-spacing:0.183px;">Подтвердить номер телефона</div>
<div class="t" style="left:190.30px;top:187.66px;font-size:34.6px;color:#121415;letter-spacing:1.000px;-webkit-text-stroke:1.0px #121415;">Обзор аккаунта</div>
<div class="t" style="left:922.00px;top:187.66px;font-size:34.6px;color:#121415;letter-spacing:1.252px;-webkit-text-stroke:1.0px #121415;">Эффективность</div>
<div class="t" style="left:232.70px;top:284.00px;font-size:22.6px;color:#7b7b7b;transform:scaleX(0.9909);transform-origin:0 50%;">Доступный баланс</div>
<div class="t" style="left:739.70px;top:277.63px;font-size:28.6px;color:#121415;letter-spacing:1.117px;-webkit-text-stroke:0.6px #121415;">0,00</div>
<div class="t" style="left:810.32px;top:285.33px;font-size:21.5px;color:#121415;transform:scaleX(0.8754);transform-origin:0 50%;">EUR</div>
<div class="t" style="left:733.50px;top:326.28px;font-size:21.8px;color:#3c8c89;letter-spacing:0.373px;">Подробнее</div>
<div class="t" style="left:231.70px;top:410.20px;font-size:22.6px;color:#7b7b7b;">Расходы за сегодня</div>
<div class="t" style="left:740.00px;top:404.23px;font-size:28.6px;color:#121415;letter-spacing:1.084px;-webkit-text-stroke:0.6px #121415;">6,09</div>
<div class="t" style="left:810.32px;top:411.93px;font-size:21.5px;color:#121415;transform:scaleX(0.8754);transform-origin:0 50%;">EUR</div>
<div class="t" style="left:190.00px;top:497.46px;font-size:34.6px;color:#121415;letter-spacing:0.718px;-webkit-text-stroke:1.0px #121415;">Статус группы объявлений</div>
<div class="t" style="left:247.75px;top:599.61px;font-size:25.2px;color:#2e7d32;-webkit-text-stroke:0.6px #2e7d32;">0</div>
<div class="t" style="left:298.80px;top:600.93px;font-size:24.7px;color:#121415;letter-spacing:1.268px;-webkit-text-stroke:0.6px #121415;">Активно</div>
<div class="t" style="left:653.00px;top:600.93px;font-size:24.7px;color:#121415;letter-spacing:1.213px;-webkit-text-stroke:0.6px #121415;">Подробнее</div>
<div class="t" style="left:245.50px;top:752.71px;font-size:25.2px;color:#85651a;-webkit-text-stroke:0.6px #85651a;">1</div>
<div class="t" style="left:293.40px;top:754.03px;font-size:24.7px;color:#121415;letter-spacing:1.078px;-webkit-text-stroke:0.6px #121415;">Частичный показ</div>
<div class="t" style="left:653.00px;top:754.03px;font-size:24.7px;color:#121415;letter-spacing:1.213px;-webkit-text-stroke:0.6px #121415;">Подробнее</div>
<div class="t" style="left:247.75px;top:905.71px;font-size:25.2px;color:#c0392f;-webkit-text-stroke:0.6px #c0392f;">0</div>
<div class="t" style="left:296.80px;top:907.03px;font-size:24.7px;color:#121415;letter-spacing:1.070px;-webkit-text-stroke:0.6px #121415;">Не показывается</div>
<div class="t" style="left:653.00px;top:907.03px;font-size:24.7px;color:#121415;letter-spacing:1.213px;-webkit-text-stroke:0.6px #121415;">Подробнее</div>
<div class="t" style="left:981.80px;top:303.68px;font-size:24.4px;color:#357d79;letter-spacing:1.408px;-webkit-text-stroke:0.6px #357d79;">График</div>
<div class="t" style="left:1105.90px;top:303.85px;font-size:24.2px;color:#121415;letter-spacing:1.614px;-webkit-text-stroke:0.7px #121415;">Данные</div>
<div class="t" style="left:995.00px;top:441.86px;font-size:23.6px;color:#121415;letter-spacing:1.772px;-webkit-text-stroke:0.7px #121415;">Стоимость</div>
<div class="t" style="left:994.14px;top:509.29px;font-size:34.8px;color:#121415;transform:scaleX(0.9311);transform-origin:0 50%;-webkit-text-stroke:0.95px #121415;">1,153.95</div>
<div class="t" style="left:1126.25px;top:516.63px;font-size:26px;color:#8a8a8a;transform:scaleX(0.8730);transform-origin:0 50%;">EUR</div>
<div class="t" style="left:995.30px;top:638.66px;font-size:23.6px;color:#121415;letter-spacing:0.727px;-webkit-text-stroke:0.7px #121415;">CTR (целевая ст…</div>
<div class="t" style="left:995.00px;top:705.69px;font-size:34.8px;color:#121415;letter-spacing:0.294px;-webkit-text-stroke:0.95px #121415;">0.73%</div>
<div class="t" style="left:995.30px;top:835.56px;font-size:23.6px;color:#121415;letter-spacing:0.798px;-webkit-text-stroke:0.7px #121415;">CPC (целевая ст…</div>
<div class="t" style="left:995.00px;top:902.99px;font-size:34.8px;color:#121415;letter-spacing:1.209px;-webkit-text-stroke:0.95px #121415;">0.03</div>
<div class="t" style="left:1073.27px;top:910.23px;font-size:26px;color:#8a8a8a;transform:scaleX(0.8634);transform-origin:0 50%;">EUR</div>
<div class="t" style="left:995.30px;top:1032.36px;font-size:23.6px;color:#121415;letter-spacing:1.125px;-webkit-text-stroke:0.7px #121415;">Цена за конверс…</div>
<div class="t" style="left:995.00px;top:1099.99px;font-size:34.8px;color:#121415;letter-spacing:1.443px;-webkit-text-stroke:0.95px #121415;">0.23</div>
<div class="t" style="left:1073.97px;top:1107.33px;font-size:26px;color:#8a8a8a;transform:scaleX(0.8634);transform-origin:0 50%;">EUR</div>
<div class="t" style="left:1743.50px;top:303.39px;font-size:26.4px;color:#121415;letter-spacing:0.416px;">7 окт. 2025 г. – 10 апр. 2026 г.</div>
<div class="t" style="left:2127.22px;top:307.11px;font-size:22px;color:#121415;transform:scaleX(0.9796);transform-origin:0 50%;">UTC+01:00</div>
<div class="t" style="left:1393.90px;top:410.68px;font-size:24.4px;color:#121415;letter-spacing:0.868px;-webkit-text-stroke:1.0px #121415;">Тренд</div>
<div class="t" style="left:1914.90px;top:411.81px;font-size:22px;color:#121415;transform:scaleX(0.9955);transform-origin:0 50%;">Посмотреть 5 лучших кампаний</div>
<div class="t" style="left:1393.20px;top:471.19px;font-size:20.6px;color:#2e3030;letter-spacing:0.729px;">Стоимость</div>
<div class="t" style="left:2074.10px;top:471.19px;font-size:20.6px;color:#2e3030;letter-spacing:0.276px;">CTR (целевая страница)</div>
<div class="t" style="left:1417.05px;top:520.97px;font-size:22.4px;color:#9a9a9a;">25</div>
<div class="t" style="left:1417.05px;top:632.77px;font-size:22.4px;color:#9a9a9a;">20</div>
<div class="t" style="left:1417.05px;top:744.57px;font-size:22.4px;color:#9a9a9a;">15</div>
<div class="t" style="left:1417.05px;top:856.37px;font-size:22.4px;color:#9a9a9a;">10</div>
<div class="t" style="left:1429.50px;top:968.17px;font-size:22.4px;color:#9a9a9a;">5</div>
<div class="t" style="left:1429.50px;top:1079.97px;font-size:22.4px;color:#9a9a9a;">0</div>
<div class="t" style="left:2270.50px;top:520.97px;font-size:22.4px;color:#9a9a9a;">1.6</div>
<div class="t" style="left:2270.50px;top:590.85px;font-size:22.4px;color:#9a9a9a;">1.4</div>
<div class="t" style="left:2270.50px;top:660.72px;font-size:22.4px;color:#9a9a9a;">1.2</div>
<div class="t" style="left:2270.50px;top:730.60px;font-size:22.4px;color:#9a9a9a;">1</div>
<div class="t" style="left:2271.50px;top:800.47px;font-size:22.4px;color:#9a9a9a;">0.8</div>
<div class="t" style="left:2271.50px;top:870.35px;font-size:22.4px;color:#9a9a9a;">0.6</div>
<div class="t" style="left:2271.50px;top:940.22px;font-size:22.4px;color:#9a9a9a;">0.4</div>
<div class="t" style="left:2271.50px;top:1010.10px;font-size:22.4px;color:#9a9a9a;">0.2</div>
<div class="t" style="left:2271.50px;top:1079.97px;font-size:22.4px;color:#9a9a9a;">0</div>
<div class="t" style="left:1407.70px;top:1113.58px;font-size:21.8px;color:#9a9a9a;letter-spacing:0.803px;">2025-10-08</div>
<div class="t" style="left:1539.80px;top:1113.58px;font-size:21.8px;color:#9a9a9a;letter-spacing:0.038px;">2025-11-07</div>
<div class="t" style="left:1661.20px;top:1113.58px;font-size:21.8px;color:#9a9a9a;letter-spacing:0.325px;">2025-12-06</div>
<div class="t" style="left:1786.70px;top:1113.58px;font-size:21.8px;color:#9a9a9a;letter-spacing:0.714px;">2026-01-05</div>
<div class="t" style="left:1916.90px;top:1113.58px;font-size:21.8px;color:#9a9a9a;letter-spacing:1.047px;">2026-02-05</div>
<div class="t" style="left:2047.80px;top:1113.58px;font-size:21.8px;color:#9a9a9a;letter-spacing:1.270px;">2026-03-08</div>
<div class="t" style="left:2183.70px;top:1113.58px;font-size:21.8px;color:#9a9a9a;letter-spacing:1.358px;">2026-04-09</div>
<!-- floating help -->
<div class="a" style="left:2457.7px;top:1110.6px;width:77.6px;height:77.6px;border-radius:39px;background:#131416"></div>
<div class="a" style="left:2477px;top:1130px;width:39px;height:39px;border-radius:20px;background:#fff"></div>
<svg class="a" style="left:2477px;top:1130px" width="39" height="39" viewBox="0 0 39 39" fill="none" stroke="#131416" stroke-width="3.2" stroke-linecap="round"><path d="M14.2 14.2a5.6 5.6 0 1 1 8.2 5c-1.9 1-2.9 2-2.9 4.3"/><circle cx="19.5" cy="29.3" r="2.1" fill="#131416" stroke="none"/></svg>
</body></html>
